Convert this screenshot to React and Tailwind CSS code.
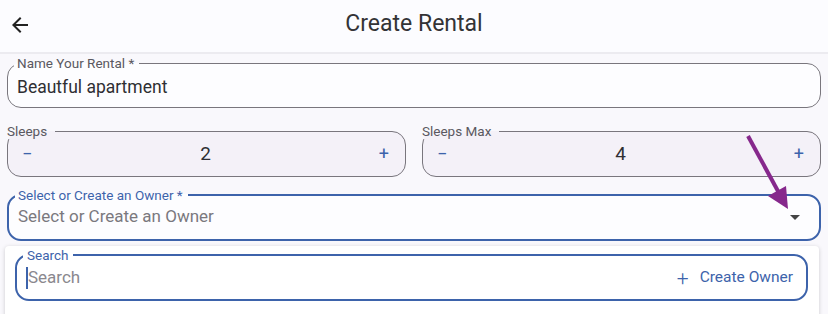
import React from "react";

function Field({ label, labelClass = "", className = "", legendClass = "", children }) {
	return (
		<fieldset className={`rounded-[14px] ${className}`}>
			<legend className={`text-[13.5px] leading-[16px] ${legendClass} ${labelClass}`}>{label}</legend>
			{children}
		</fieldset>
	);
}

function Stepper({ label, value }) {
	return (
		<Field
			label={label}
			className="flex-1 border border-[#79767d] bg-[#f4f1f8] pl-0"
			legendClass="-ml-px pr-[8px]"
			labelClass="text-[#5a5860]"
		>
			<div className="flex h-[24px] items-center mt-[3px] mb-[10px] pl-[14px] pr-[16px] text-[#3d63ab]">
				<span className="text-[18px] leading-none">−</span>
				<span className="flex-1 text-center text-[19px] text-[#2f2f33]">{value}</span>
				<span className="text-[18px] leading-none">+</span>
			</div>
		</Field>
	);
}

export default function App() {
	return (
		<div className="relative h-[314px] w-[828px] overflow-hidden bg-[#f9f8fc] font-['Roboto',sans-serif]">
			<div className="relative flex h-[54px] items-center border-b-2 border-[#ecebf0] bg-[#fcfcff] pb-[3px]">
				<svg className="ml-[8px] h-6 w-6 text-[#222]" viewBox="0 0 24 24" fill="currentColor">
					<path d="M20 11H7.83l5.59-5.59L12 4l-8 8 8 8 1.41-1.41L7.83 13H20v-2z" />
				</svg>
				<h1 className="pointer-events-none absolute left-0 right-0 text-center text-[23px] text-[#333336]">Create Rental</h1>
			</div>

			<div className="px-[7px] pt-[1px]">
				<Field
					label="Name Your Rental *"
					className="border border-[#79767d] bg-[#fdfdff] pl-[6px]"
					legendClass="pl-[3px] pr-[5px]"
					labelClass="text-[#5a5860]"
				>
					<div className="ml-[3px] mt-[4px] mb-[8px] h-[24px] text-[17.5px] leading-[24px] text-[#2f2f33]">Beautful apartment</div>
				</Field>

				<div className="mt-[15px] flex gap-[16px]">
					<Stepper label="Sleeps" value="2" />
					<Stepper label="Sleeps Max" value="4" />
				</div>

				<div className="mt-[10px]">
					<Field
						label="Select or Create an Owner *"
						className="border-2 border-[#3d63ab] bg-[#fdfdff] pl-[6px]"
						legendClass="pl-[3px] pr-[5px]"
						labelClass="text-[#3d63ab]"
					>
						<div className="ml-[3px] mr-[12px] mt-[2px] mb-[10px] flex h-[24px] items-center">
							<span className="flex-1 text-[17px] text-[#7a787e]">Select or Create an Owner</span>
							<svg className="h-6 w-6 text-[#444]" viewBox="0 0 24 24" fill="currentColor">
								<path d="M7 10l5 5 5-5z" />
							</svg>
						</div>
					</Field>
				</div>

				<div className="mt-[5px] -ml-[2px] mr-[2px] h-[80px] rounded-t-[4px] bg-white pl-[10px] pr-[11px] pt-[1px] shadow-[0_1px_4px_rgba(0,0,0,0.18)]">
					<Field
						label="Search"
						className="border-2 border-[#3d63ab] bg-white pl-[6px]"
						legendClass="pl-[4px] pr-[5px]"
						labelClass="text-[#3d63ab]"
					>
						<div className="ml-[3px] mr-[13px] mt-[3px] mb-[9px] flex h-[24px] items-center">
							<span className="h-[22px] w-[2px] bg-[#3d63ab]" />
							<span className="flex-1 text-[17px] text-[#8a888e]">Search</span>
							<span className="flex items-center gap-[11px] text-[15.5px] text-[#3d63ab]">
								<span className="text-[21px] leading-none font-light">+</span>
								Create Owner
							</span>
						</div>
					</Field>
				</div>
			</div>

			<svg className="pointer-events-none absolute inset-0 h-[314px] w-[828px]" viewBox="0 0 828 314">
				<line x1="748" y1="136" x2="779" y2="193" stroke="#86288c" strokeWidth="4" />
				<polygon points="788,209 768,196 786,186" fill="#86288c" />
			</svg>
		</div>
	);
}
